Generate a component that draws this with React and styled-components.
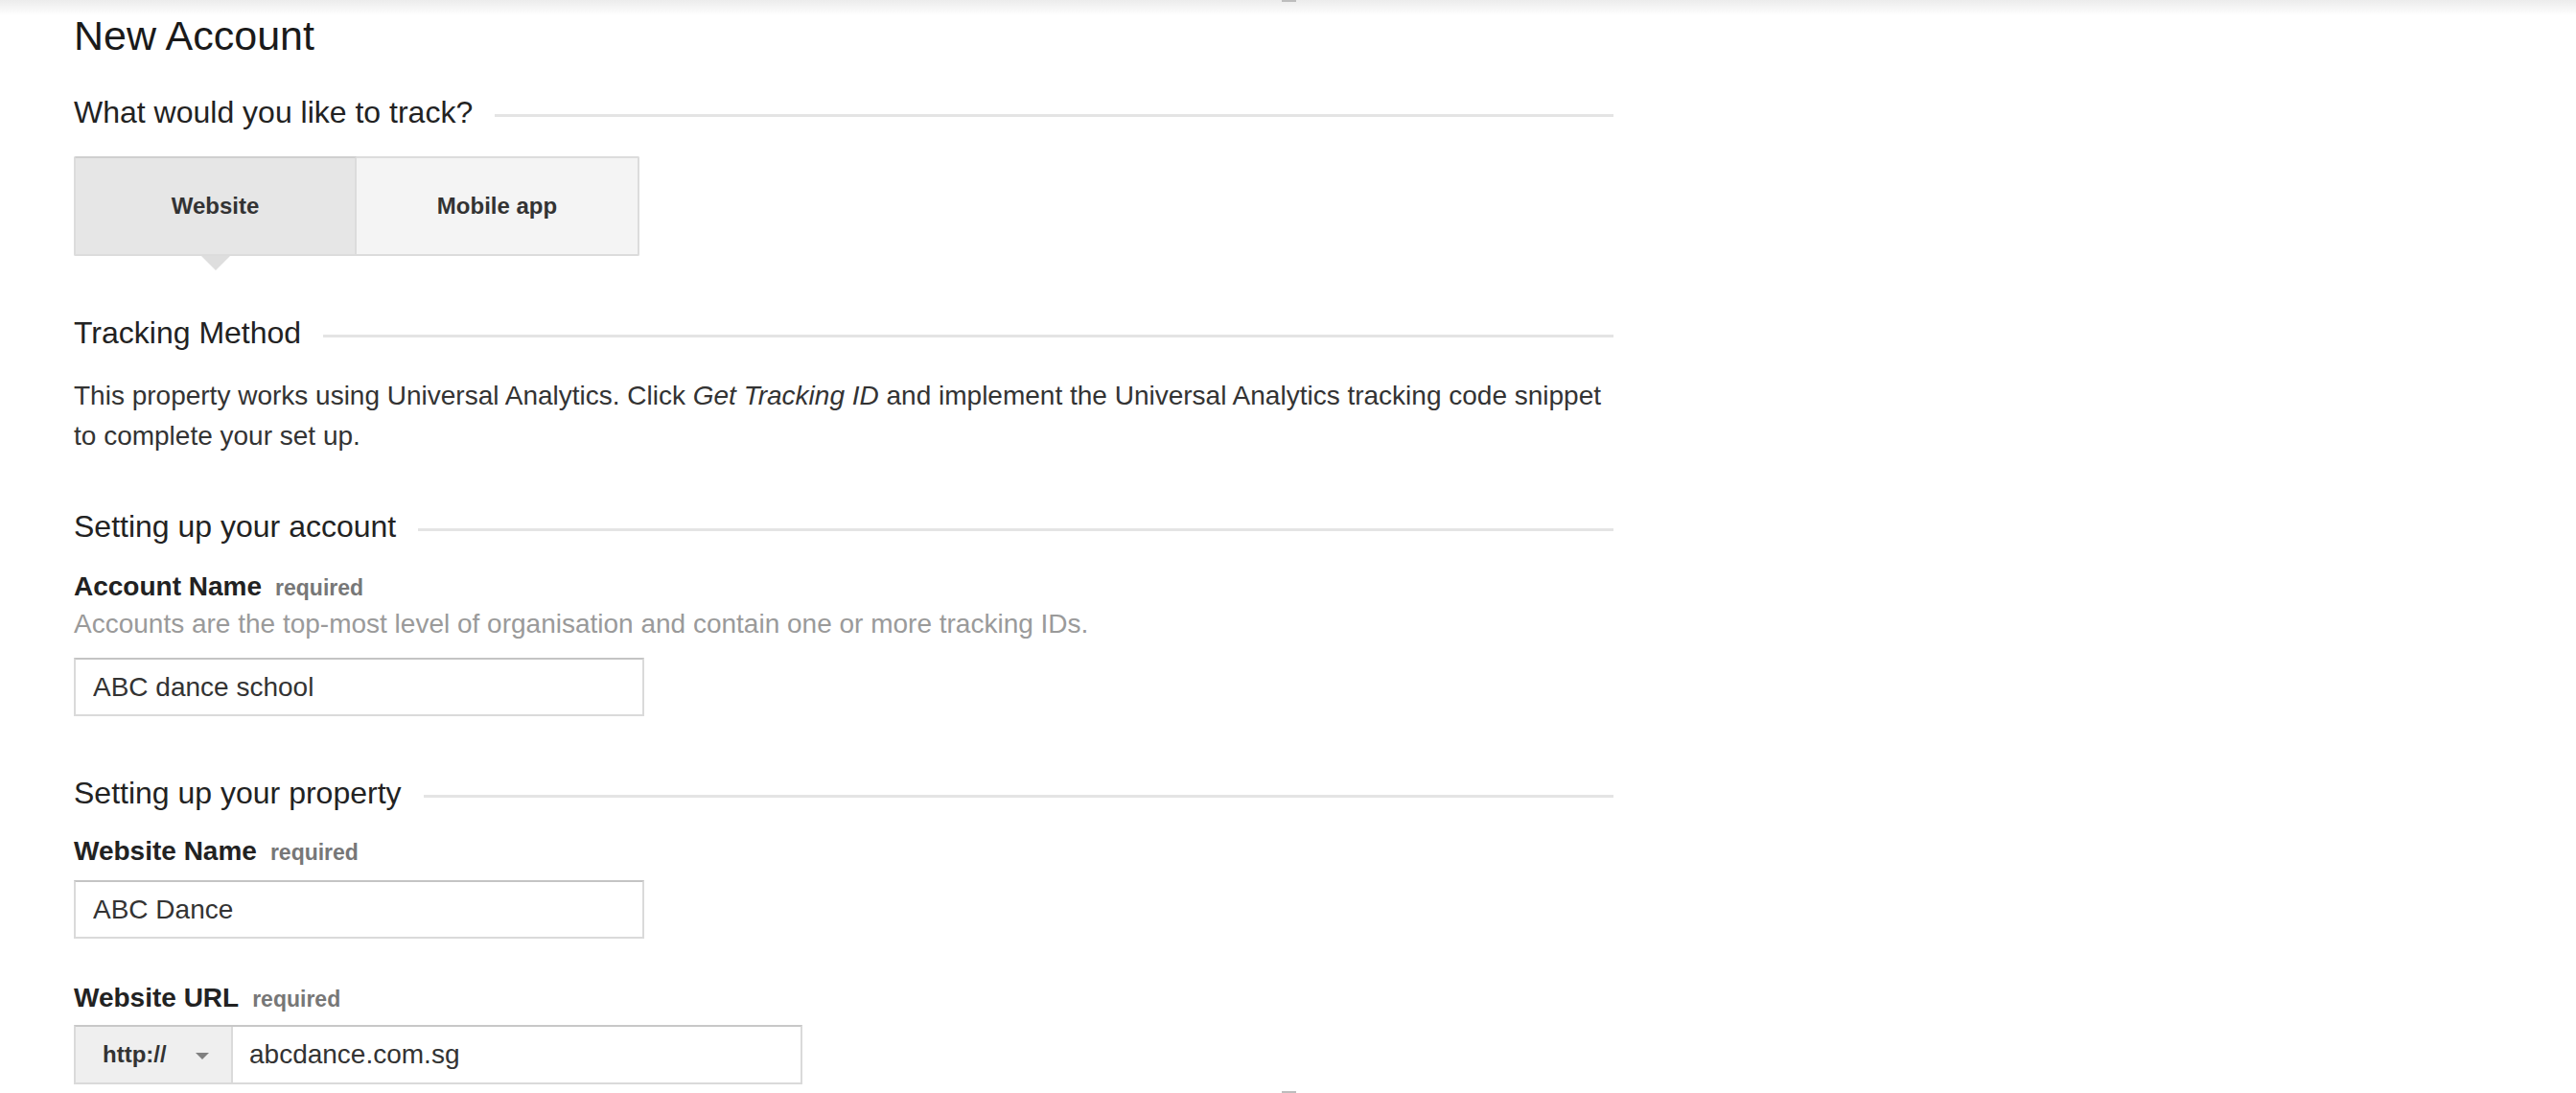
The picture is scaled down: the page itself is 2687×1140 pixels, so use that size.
import styled, { createGlobalStyle } from "styled-components";

const GlobalStyle = createGlobalStyle`
  html, body {
    margin: 0;
    padding: 0;
  }
  body {
    font-family: "Liberation Sans", Arial, sans-serif;
    color: #222;
    background: linear-gradient(#ececec 0, #f5f5f5 8px, #fff 16px) no-repeat;
    background-color: #fff;
  }
`;

const Page = styled.main`
  position: relative;
  min-height: 1140px;
  box-sizing: border-box;
  padding: 12px 0 0 77px;
  &::before,
  &::after {
    content: "";
    position: absolute;
    left: 50%;
    width: 15px;
    height: 2px;
    margin-left: -7px;
    background: #bdbdbd;
  }
  &::before {
    top: 0;
  }
  &::after {
    bottom: 0;
  }
`;

const Content = styled.div`
  width: 1606px;
`;

const Title = styled.h1`
  margin: 0;
  font-size: 43px;
  line-height: 50px;
  font-weight: normal;
  color: #1a1a1a;
`;

const SectionRow = styled.div`
  display: flex;
  align-items: center;
  gap: 23px;
  margin-top: ${(p) => p.$top}px;
  h2 {
    margin: 0;
    font-size: 32px;
    line-height: 40px;
    font-weight: normal;
    color: #222;
    white-space: nowrap;
  }
`;

const Rule = styled.div`
  flex: 1;
  height: 3px;
  margin-top: 7px;
  background: #e4e4e4;
`;

const Section = ({ title, top }) => (
  <SectionRow $top={top}>
    <h2>{title}</h2>
    <Rule />
  </SectionRow>
);

const ToggleGroup = styled.div`
  display: flex;
  margin-top: 26px;
`;

const Toggle = styled.button`
  position: relative;
  width: 295px;
  height: 104px;
  box-sizing: border-box;
  padding: 0;
  font-family: inherit;
  font-size: 24px;
  font-weight: bold;
  color: #333;
  border: 2px solid #dcdcdc;
  border-top-color: ${(p) => (p.$active ? "#cfcfcf" : "#dcdcdc")};
  border-left-width: ${(p) => (p.$active ? "2px" : "0")};
  background: ${(p) => (p.$active ? "#e6e6e6" : "#f4f4f4")};
  border-radius: ${(p) => (p.$active ? "2px 0 0 2px" : "0 2px 2px 0")};
  &::after {
    content: "";
    display: ${(p) => (p.$active ? "block" : "none")};
    position: absolute;
    left: 50%;
    bottom: -17px;
    margin-left: -15px;
    border-left: 15px solid transparent;
    border-right: 15px solid transparent;
    border-top: 15px solid #dedede;
  }
`;

const Paragraph = styled.p`
  margin: 25px 0 0;
  font-size: 28px;
  line-height: 42px;
  color: #333;
  em {
    font-style: italic;
  }
`;

const Label = styled.div`
  margin-top: ${(p) => p.$top}px;
  font-size: 28px;
  line-height: 37px;
  font-weight: bold;
  color: #222;
  span {
    margin-left: 14px;
    font-size: 23px;
    color: #777;
  }
`;

const Help = styled.div`
  font-size: 28px;
  line-height: 37px;
  color: #9a9a9a;
`;

const TextInput = styled.input`
  display: block;
  margin-top: ${(p) => p.$top}px;
  width: 595px;
  height: 61px;
  box-sizing: border-box;
  padding: 0 18px;
  font-family: inherit;
  font-size: 28px;
  color: #333;
  background: #fff;
  border: 2px solid #dadada;
  border-top-color: #c4c4c4;
  outline: none;
`;

const UrlGroup = styled.div`
  display: flex;
  width: 760px;
  height: 62px;
  margin-top: 8px;
  box-sizing: border-box;
  border: 2px solid #dadada;
  border-top-color: #c8c8c8;
`;

const Protocol = styled.div`
  display: flex;
  align-items: center;
  gap: 30px;
  width: 164px;
  box-sizing: border-box;
  padding-left: 28px;
  font-size: 24px;
  font-weight: bold;
  color: #333;
  background: #efefef;
  border-right: 2px solid #dadada;
`;

const Caret = styled.span`
  width: 0;
  height: 0;
  margin-top: 2px;
  border-left: 7px solid transparent;
  border-right: 7px solid transparent;
  border-top: 7px solid #808080;
`;

const UrlInput = styled.input`
  flex: 1;
  min-width: 0;
  padding: 0 17px;
  font-family: inherit;
  font-size: 28px;
  color: #333;
  border: none;
  outline: none;
  background: #fff;
`;

const App = () => {
  return (
    <>
      <GlobalStyle />
      <Page>
        <Content>
          <Title>New Account</Title>

          <Section title="What would you like to track?" top={35} />
          <ToggleGroup>
            <Toggle $active>Website</Toggle>
            <Toggle>Mobile app</Toggle>
          </ToggleGroup>

          <Section title="Tracking Method" top={60} />
          <Paragraph>
            This property works using Universal Analytics. Click{" "}
            <em>Get Tracking ID</em> and implement the Universal Analytics
            tracking code snippet to complete your set up.
          </Paragraph>

          <Section title="Setting up your account" top={53} />
          <Label $top={24}>
            Account Name<span>required</span>
          </Label>
          <Help>
            Accounts are the top-most level of organisation and contain one or
            more tracking IDs.
          </Help>
          <TextInput $top={17} defaultValue="ABC dance school" />

          <Section title="Setting up your property" top={60} />
          <Label $top={22}>
            Website Name<span>required</span>
          </Label>
          <TextInput $top={10} defaultValue="ABC Dance" />

          <Label $top={43}>
            Website URL<span>required</span>
          </Label>
          <UrlGroup>
            <Protocol>
              http://
              <Caret />
            </Protocol>
            <UrlInput defaultValue="abcdance.com.sg" />
          </UrlGroup>
        </Content>
      </Page>
    </>
  );
};

export default App;
